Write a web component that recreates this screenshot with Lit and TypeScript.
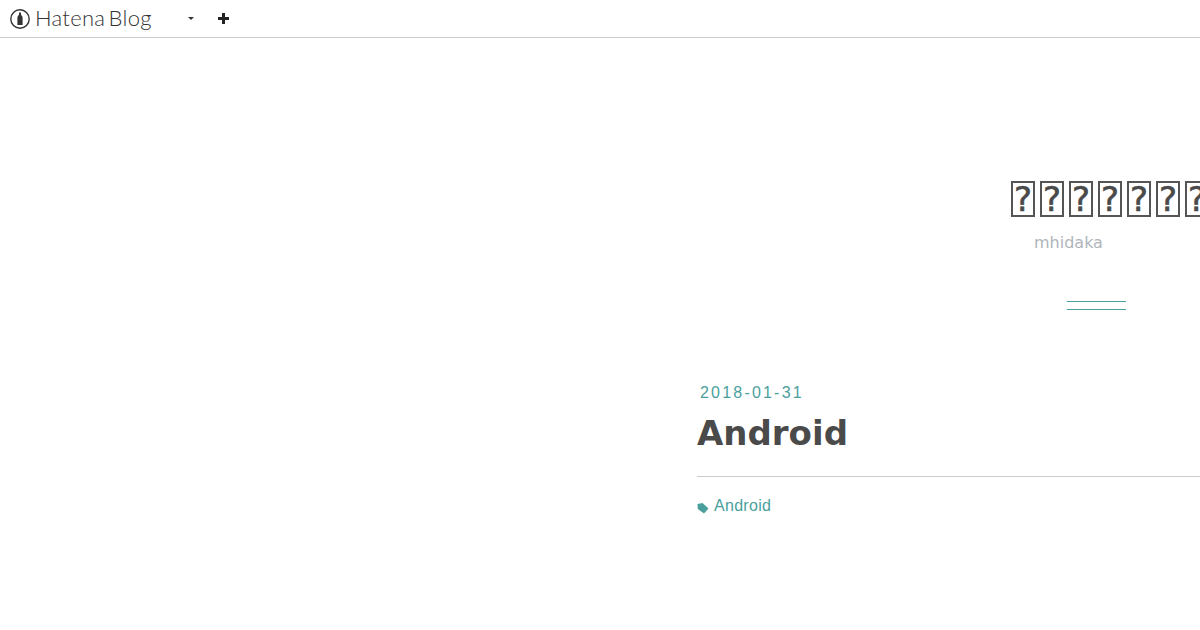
import { LitElement, html, css } from "lit";
import { customElement } from "lit/decorators.js";

@customElement("app-root")
export class AppRoot extends LitElement {
  static styles = css`
    :host { display: block; width: 1200px; height: 630px; overflow: hidden; background: #fff; font-family: "DejaVu Sans", sans-serif; color: #444; }
    .bar { height: 37px; border-bottom: 1px solid #ccc; display: flex; align-items: center; padding-left: 10px; box-sizing: content-box; }
    .logo-mark { width: 20px; height: 20px; flex: none; }
    .logo-text { font-family: "Lato", sans-serif; font-weight: 300; font-size: 22px; letter-spacing: 0.3px; margin: -2px 0 0 5px; color: #333; width: 118px; white-space: nowrap; word-spacing: -3px; }
    .caret { width: 0; height: 0; border-left: 3px solid transparent; border-right: 3px solid transparent; border-top: 3px solid #333; margin-left: 35px; flex: none; }
    .plus { width: 11px; height: 11px; margin-left: 24px; flex: none; }
    .header { height: 262px; display: flex; flex-direction: column; padding-left: 1011px; padding-top: 143px; box-sizing: border-box; }
    .title { display: flex; gap: 5px; white-space: nowrap; }
    .box { flex: none; width: 20px; height: 32px; border: 2px solid #555; display: flex; align-items: center; justify-content: center; font-size: 34px; font-weight: 400; -webkit-text-stroke: 0.6px #4a4a4a; line-height: 1; color: #4a4a4a; }
    .author { margin: 16px 0 0 23px; font-size: 16px; color: #b0b5ba; }
    .rule { width: 59px; height: 7px; margin: 49px 0 0 56px; border-top: 1px solid #4a9f9c; border-bottom: 1px solid #4a9f9c; flex: none; }
    .entry { margin-left: 697px; margin-top: 84px; }
    .date { margin-left: 3px; font-family: "Liberation Sans", sans-serif; font-size: 16px; letter-spacing: 2.2px; color: #4a9f9c; line-height: 18px; }
    h1 { margin: 10px 0 0; font-size: 34px; font-weight: 700; line-height: 42px; color: #4a4a4a; }
    .divider { height: 1px; background: #ccc; margin-top: 22px; }
    .tag { display: flex; align-items: center; margin-top: 19px; font-family: "Liberation Sans", sans-serif; font-size: 16px; letter-spacing: 0.3px; color: #4a9f9c; line-height: 20px; }
    .tag svg { width: 12px; height: 12px; margin: 3px 5px 0 0; flex: none; }
  `;

  render() {
    return html`
      <div class="bar">
        <svg class="logo-mark" viewBox="0 0 20 20">
          <circle cx="10" cy="10" r="9.2" fill="none" stroke="#333" stroke-width="1.4"></circle>
          <path d="M9 3.4h2v2.4c1 .8 1.6 1.8 1.6 3.2v7H7.4V9c0-1.4.6-2.4 1.6-3.2z" fill="#333"></path>
        </svg>
        <span class="logo-text">Hatena Blog</span>
        <span class="caret"></span>
        <svg class="plus" viewBox="0 0 11 11"><path d="M4 0h3v4h4v3H7v4H4V7H0V4h4z" fill="#222"></path></svg>
      </div>
      <div class="header">
        <div class="title">
          ${[0, 1, 2, 3, 4, 5, 6].map(() => html`<span class="box">?</span>`)}
        </div>
        <div class="author">mhidaka</div>
        <div class="rule"></div>
      </div>
      <div class="entry">
        <div class="date">2018-01-31</div>
        <h1>Android</h1>
        <div class="divider"></div>
        <div class="tag">
          <svg viewBox="0 0 12 12"><path d="M0.5 2 L5.5 1 L11.5 6.5 L7 11.5 L0.8 7z" fill="#4a9f9c"></path></svg>
          <span>Android</span>
        </div>
      </div>
    `;
  }
}
